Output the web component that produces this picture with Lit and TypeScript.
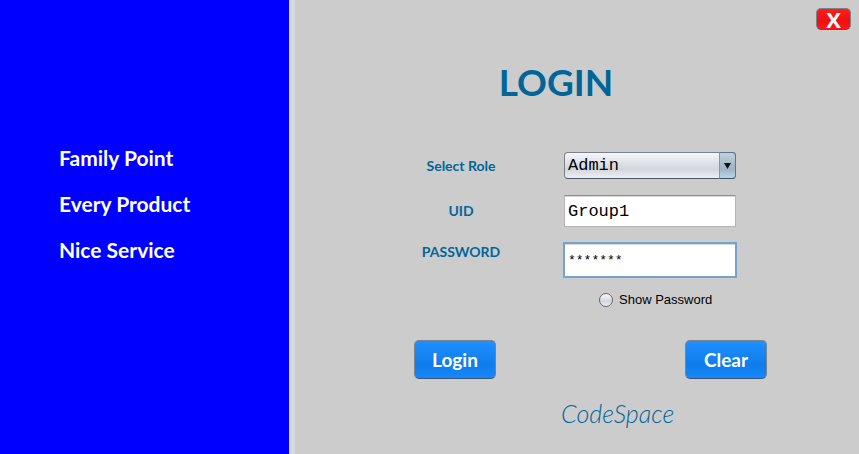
import { LitElement, html, css } from "lit";
import { customElement, state } from "lit/decorators.js";

@customElement("app-root")
export class AppRoot extends LitElement {
  @state() private slogans = ["Family Point", "Every Product", "Nice Service"];

  static styles = css`
    :host {
      display: flex;
      min-height: 100vh;
      background: #cccccc;
      color: #006699;
      font-family: "Century Gothic", Lato, sans-serif;
      font-weight: 700;
    }
    * {
      box-sizing: border-box;
    }
    aside {
      flex: 0 0 295px;
      border-right: 6px solid #d6d9df;
      background: #0000ff;
      color: #ffffff;
      padding: 146px 20px 20px 59px;
    }
    .slogans {
      list-style: none;
      margin: 0;
      padding: 0;
      display: flex;
      flex-direction: column;
      gap: 22px;
      font-size: 21px;
      line-height: 24px;
    }
    main {
      flex: 1;
      min-width: 0;
      display: flex;
      flex-direction: column;
      padding: 8px 8px 8px 119px;
    }
    button {
      font-family: inherit;
      font-weight: 700;
      color: #ffffff;
      padding: 0;
      border: 1px solid #7c828a;
      border-bottom-color: #3c5878;
    }
    .close {
      align-self: flex-end;
      width: 35px;
      height: 22px;
      border-radius: 5px;
      background: linear-gradient(#ff1c1c, #ee1010 60%, #ff1818);
      font-family: "Open Sans", sans-serif;
      font-weight: 700;
      font-size: 22px;
      line-height: 20px;
    }
    form {
      width: 353px;
      max-width: 100%;
    }
    h1 {
      margin: 28px 0 46px;
      width: 284px;
      text-align: center;
      font-size: 37px;
      line-height: 48px;
    }
    .fields {
      display: grid;
      grid-template-columns: 94px 172px;
      column-gap: 56px;
      row-gap: 16px;
      align-items: center;
    }
    .label {
      text-align: center;
      font-size: 14px;
      line-height: 18px;
    }
    .top {
      align-self: start;
    }
    .role {
      position: relative;
      height: 27px;
    }
    select,
    .text {
      display: block;
      width: 100%;
      margin: 0;
      color: #000000;
      font-family: "Courier New", "Liberation Mono", monospace;
      font-size: 17px;
    }
    select {
      appearance: none;
      height: 27px;
      padding: 0 20px 0 3px;
      border: 1px solid #7b818c;
      border-bottom-color: #4f5865;
      border-radius: 4px;
      background: linear-gradient(#f6f7f9, #d9dce2 50%, #d3d7dd 65%, #eceef4);
    }
    .arrow {
      position: absolute;
      inset: 0 0 0 auto;
      width: 17px;
      display: grid;
      place-items: center;
      border: 1px solid #5b7890;
      border-bottom-color: #35556f;
      border-left-color: #8299ad;
      border-radius: 0 4px 4px 0;
      background: linear-gradient(#c3d1dd, #a3b8ca 50%, #9fb5c7 65%, #bcd3e6);
      pointer-events: none;
    }
    .text {
      height: 32px;
      padding: 0 3px;
      border: 1px solid #b5b5b5;
      border-top-color: #8d8e8f;
      border-radius: 0;
      background: #ffffff;
      box-shadow: inset 0 1px #d8d8d8;
      outline: none;
    }
    .secret {
      height: 34px;
      font-size: 13px;
      outline: 2px solid #73a4d1;
      outline-offset: -1px;
    }
    .show {
      display: flex;
      align-items: center;
      gap: 6px;
      margin: 14px 0 31px 185px;
      color: #000000;
      font: 400 13px/18px "Liberation Sans", Arial, sans-serif;
    }
    .show input {
      appearance: none;
      width: 14px;
      height: 14px;
      margin: 0;
      border: 1px solid #62676f;
      border-radius: 50%;
      background: linear-gradient(#fafafc, #d3d7de 60%, #eceef4);
    }
    .show input:checked {
      background: radial-gradient(#222222 3px, #dfe2e8 4px);
    }
    .actions {
      display: flex;
      justify-content: space-between;
    }
    .actions button {
      width: 82px;
      height: 39px;
      border-radius: 5px;
      background: linear-gradient(#1e90ff, #107cec 65%, #1688fa);
      font-size: 19px;
    }
    .brand {
      margin: 20px 0 0 147px;
      font-size: 25px;
      line-height: 28px;
      font-weight: 300;
      font-style: italic;
    }
  `;

  render() {
    return html`
      <aside>
        <ul class="slogans">
          ${this.slogans.map((s) => html`<li>${s}</li>`)}
        </ul>
      </aside>
      <main>
        <button class="close" type="button" aria-label="X">X</button>
        <form @submit=${(e: Event) => e.preventDefault()}>
          <h1>LOGIN</h1>
          <div class="fields">
            <label class="label" for="role">Select Role</label>
            <div class="role">
              <select id="role"><option>Admin</option></select>
              <span class="arrow">
                <svg width="7" height="6" viewBox="0 0 7 6" aria-hidden="true">
                  <path d="M0 0h7L3.5 6z" fill="#111" />
                </svg>
              </span>
            </div>
            <label class="label" for="uid">UID</label>
            <input class="text" id="uid" type="text" value="Group1" />
            <label class="label top" for="password">PASSWORD</label>
            <input class="text secret" id="password" type="text" autocomplete="off" value="*******" />
          </div>
          <label class="show"><input type="radio" name="show" />Show Password</label>
          <div class="actions">
            <button type="submit">Login</button>
            <button type="reset">Clear</button>
          </div>
        </form>
        <div class="brand">CodeSpace</div>
      </main>
    `;
  }
}
